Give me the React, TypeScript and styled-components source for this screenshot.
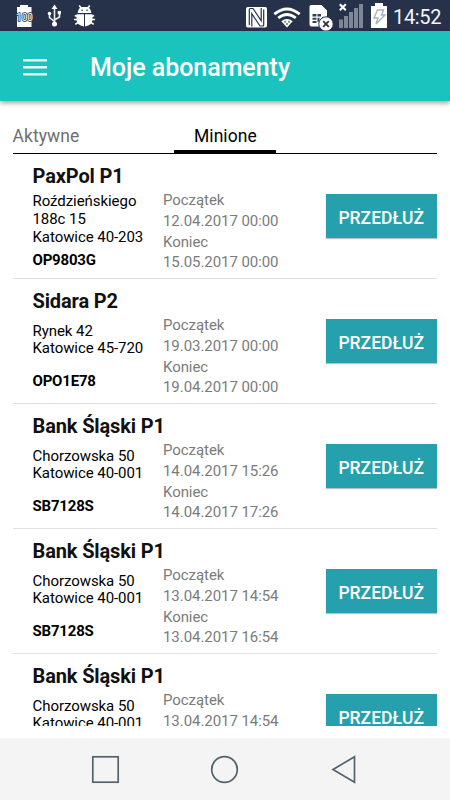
import React from 'react';
import styled, { createGlobalStyle } from 'styled-components';

const GlobalStyle = createGlobalStyle`
  * { box-sizing: border-box; }
  body { margin: 0; background: #fff; font-family: Roboto, sans-serif; }
`;

const Screen = styled.div`
  width: 450px;
  height: 800px;
  display: flex;
  flex-direction: column;
  overflow: hidden;
  background: #fff;
`;

const StatusBar = styled.header`
  height: 31px;
  flex: none;
  background: #25324a;
`;

const StatusIcons = styled.svg`
  display: block;
`;

const StatusLine = styled.div`
  display: flex;
  height: 31px;
`;

const Clock = styled.time`
  color: #f4f5f7;
  font-size: 20px;
  line-height: 34px;
  letter-spacing: -0.35px;
`;

const AppBar = styled.div`
  height: 70px;
  flex: none;
  display: flex;
  align-items: center;
  padding: 2px 0 0 23px;
  background: #1ac3bd;
  box-shadow: 0 2px 5px rgba(0, 0, 0, 0.38);
`;

const MenuButton = styled.button`
  width: 24px;
  height: 17px;
  margin-right: 43px;
  padding: 0;
  border: 0;
  background: none;
  svg { display: block; }
`;

const Title = styled.h1`
  margin: 0;
  padding-top: 2px;
  color: #fff;
  font-size: 25px;
  font-weight: 500;
  line-height: 30px;
  letter-spacing: -0.04px;
`;

const Tabs = styled.nav`
  height: 53px;
  flex: none;
  display: flex;
  margin: 0 13px 0 12.5px;
  padding-top: 16px;
  border-bottom: 1px solid #000;
`;

const Tab = styled.div<{ $active?: boolean }>`
  width: ${p => (p.$active ? 102 : 161.9)}px;
  height: 36px;
  padding-top: 7px;
  color: ${p => (p.$active ? '#000' : '#6e6e6e')};
  border-bottom: ${p => (p.$active ? '3px solid #000' : '0')};
  text-align: ${p => (p.$active ? 'center' : 'left')};
  font-size: 17.5px;
  line-height: 24px;
  letter-spacing: 0.06px;
`;

const List = styled.main`
  height: 572px;
  flex: none;
  margin: 0 13px 0 12.5px;
  overflow: hidden;
`;

const Row = styled.article`
  height: 125px;
  padding: 8px 0 0 20px;
  border-bottom: 1px solid #e0e0e0;
`;

const Name = styled.h2`
  height: 28px;
  margin: 0;
  color: #111;
  font-size: 20px;
  font-weight: 700;
  line-height: 28px;
  letter-spacing: -0.13px;
  white-space: nowrap;
`;

const Details = styled.div`
  display: flex;
  height: 84px;
`;

const Place = styled.div`
  width: 130.5px;
  height: 83.2px;
  display: flex;
  flex-direction: column;
  justify-content: space-around;
  color: #000;
  font-size: 15px;
  line-height: 17.6px;
  letter-spacing: -0.06px;
`;

const Address = styled.div`
  padding-top: 0.3px;
  white-space: pre-line;
`;

const Code = styled.div`
  font-weight: 700;
  letter-spacing: -0.2px;
`;

const Dates = styled.div`
  width: 162.5px;
  color: #7b7b7b;
  font-size: 15px;
  line-height: 20.8px;
  letter-spacing: -0.06px;
`;

const Extend = styled.button`
  width: 111.5px;
  height: 44px;
  margin-top: 4px;
  padding: 3px 0 0;
  border: 0;
  background: #26a0ac;
  box-shadow: 0 1px 1px rgba(0, 0, 0, 0.25);
  color: #fff;
  font-family: inherit;
  font-size: 17.5px;
  font-weight: 500;
`;

const NavBar = styled.footer`
  height: 62px;
  flex: none;
  margin-top: 12px;
  background: #f4f4f4;
`;

const passes = [
  { name: 'PaxPol P1', address: 'Roździeńskiego\n188c 15\nKatowice 40-203', code: 'OP9803G', start: '12.04.2017 00:00', end: '15.05.2017 00:00' },
  { name: 'Sidara P2', address: 'Rynek 42\nKatowice 45-720', code: 'OPO1E78', start: '19.03.2017 00:00', end: '19.04.2017 00:00' },
  { name: 'Bank Śląski P1', address: 'Chorzowska 50\nKatowice 40-001', code: 'SB7128S', start: '14.04.2017 15:26', end: '14.04.2017 17:26' },
  { name: 'Bank Śląski P1', address: 'Chorzowska 50\nKatowice 40-001', code: 'SB7128S', start: '13.04.2017 14:54', end: '13.04.2017 16:54' },
  { name: 'Bank Śląski P1', address: 'Chorzowska 50\nKatowice 40-001', code: 'SB7128S', start: '13.04.2017 14:54', end: '13.04.2017 16:54' },
];

const BatteryLabel = styled.text`
  font: 400 10px Roboto, sans-serif;
  stroke: #25324a;
  stroke-width: 1.6px;
  paint-order: stroke;
`;

function SystemIcons() {
  return (
    <StatusIcons width="393" height="31" viewBox="0 0 393 31" fill="#fff">
      <path d="M20 5h8v2h3.5v20H17V7h3z" />
      <BatteryLabel x="16" y="20.7" textLength="17" lengthAdjust="spacingAndGlyphs">100</BatteryLabel>
      <g fill="none" stroke="#e9ebef" strokeWidth="1.6">
        <path d="M54.5 8v15M49.5 14v3.5l5 4M59.5 12v5l-5 3" />
      </g>
      <path d="M54.5 4.5l3 4.5h-6zM57.7 11h3.2v3.2h-3.2z" />
      <circle cx="49.5" cy="13.5" r="1.8" /><circle cx="54.5" cy="24" r="2.5" />
      <path d="M77.7 13q.5-5 4-6h5.6q3.5 1 4 6zM76.5 14.2h7.5V26.5q-7.5-1.2-7.5-7zM85 14.2h7.5v5.3q0 5.8-7.5 7z" />
      <path d="M81.2 8l-2-2.5M87.8 8l2-2.5M77.5 16.5l-2.7-1M77 19.5h-3M78 22.5l-2.7 1.8M91.5 16.5l2.7-1M92 19.5h3M91 22.5l2.7 1.8" stroke="#fff" strokeWidth="1.6" />
      <circle cx="82" cy="10.3" r=".8" fill="#25324a" /><circle cx="87" cy="10.3" r=".8" fill="#25324a" />
      <rect x="246" y="7" width="21" height="20.5" rx="1.8" />
      <path d="M249.3 25V9.5q0-1 1-1h2.7l8.2 12.3V8M263.7 9.5V25q0 1-1 1H260l-8.2-12.3V26.5" fill="none" stroke="#25324a" strokeWidth="1.2" />
      <g fill="none" stroke="#fff" strokeWidth="2.8">
        <path d="M274.3 14.2q12.7-10.5 25.4 0M278.2 18q8.8-7 17.6 0" />
      </g>
      <path d="M281.3 21.2q5.7-4.4 11.4 0l-5.7 6.3z" />
      <path d="M284 20.8h2v2h-2zM288 20.8h2v2h-2zM286 23h2v2h-2z" fill="#8992a0" />
      <path d="M311 5h10.5l5.5 5.5V17h-5v9.5h-10.5q-2 0-2-2V7q0-2 1.5-2z" />
      <path d="M312.5 14h4v2.5h-4zM317.5 14h3.5v2.5h-3.5zM312.5 17.7h4v2h-4zM312.5 21h4v2h-4zM317.5 17.7h2v4h-2z" fill="#34425a" />
      <circle cx="326" cy="24" r="7.2" stroke="#25324a" strokeWidth="1" />
      <path d="M323.2 21.2l5.6 5.6M328.8 21.2l-5.6 5.6" stroke="#25324a" strokeWidth="1.7" />
      <path d="M339 19.5h4V28h-4zM344 16h4v12h-4zM349 12h4v16h-4zM354 8h4v20h-4zM359 4h4v24h-4z" fill="#7d8795" />
      <path d="M339.8 4.3l6 6M345.8 4.3l-6 6" stroke="#fff" strokeWidth="2.1" />
      <path d="M375 3h8v3h4v22h-16V6h4z" />
      <path d="M377.5 10h6l-2 5h3.5l-9 9 2-6h-4z" fill="none" stroke="#abb1bb" strokeWidth="1.4" />
    </StatusIcons>
  );
}

export default function App() {
  return (
    <>
      <GlobalStyle />
      <Screen>
        <StatusBar>
          <StatusLine><SystemIcons /><Clock>14:52</Clock></StatusLine>
        </StatusBar>
        <AppBar>
          <MenuButton aria-label="Menu">
            <svg width="24" height="17" fill="#e9fcfb"><path d="M0 0h24v2.5H0zM0 7h24v2.5H0zM0 14h24v2.5H0z" /></svg>
          </MenuButton>
          <Title>Moje abonamenty</Title>
        </AppBar>
        <Tabs><Tab>Aktywne</Tab><Tab $active>Minione</Tab></Tabs>
        <List>
          {passes.map((pass, index) => (
            <Row key={index}>
              <Name>{pass.name}</Name>
              <Details>
                <Place>
                  <Address>{pass.address}</Address>
                  <Code>{pass.code}</Code>
                </Place>
                <Dates>
                  <div>Początek</div><div>{pass.start}</div>
                  <div>Koniec</div><div>{pass.end}</div>
                </Dates>
                <Extend>PRZEDŁUŻ</Extend>
              </Details>
            </Row>
          ))}
        </List>
        <NavBar>
          <svg width="450" height="62" fill="none" stroke="#52636e" strokeWidth="1.7">
            <rect x="92.8" y="18.8" width="25.4" height="25.4" />
            <circle cx="224.5" cy="31.5" r="12.8" />
            <path d="M354.5 18.8v25.4L333 31.5z" />
          </svg>
        </NavBar>
      </Screen>
    </>
  );
}
